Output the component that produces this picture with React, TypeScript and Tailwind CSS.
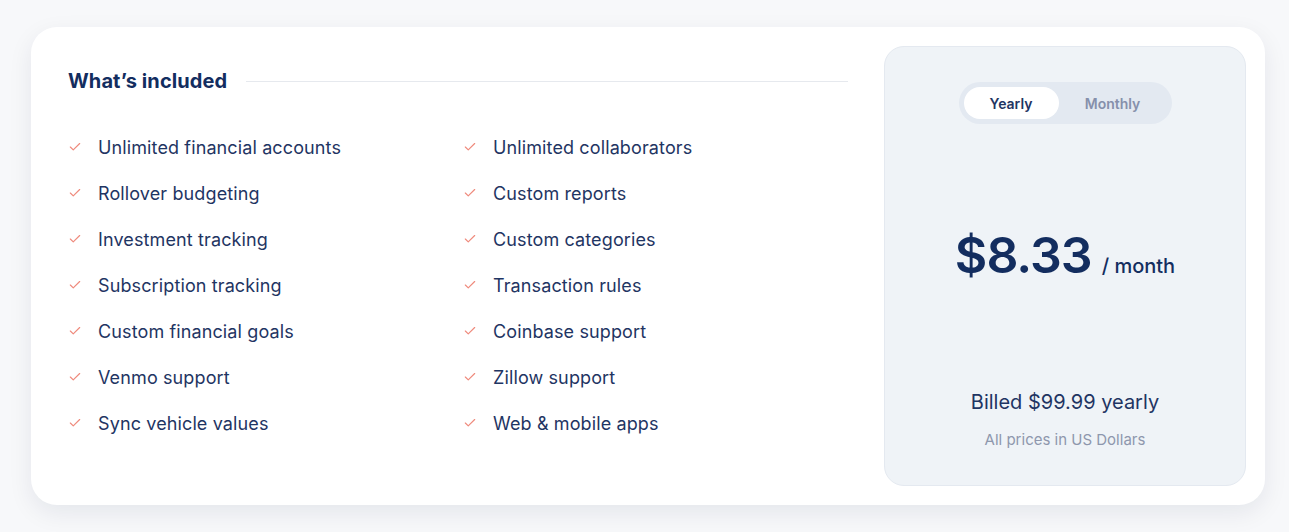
import { Check } from 'lucide-react'

const left = [
  'Unlimited financial accounts',
  'Rollover budgeting',
  'Investment tracking',
  'Subscription tracking',
  'Custom financial goals',
  'Venmo support',
  'Sync vehicle values',
]

const right = [
  'Unlimited collaborators',
  'Custom reports',
  'Custom categories',
  'Transaction rules',
  'Coinbase support',
  'Zillow support',
  'Web & mobile apps',
]

function Item({ label }: { label: string }) {
  return (
    <li className="flex items-center h-[46px]">
      <Check className="w-[14px] h-[14px] text-[#ef8a7c] shrink-0" strokeWidth={2} />
      <span className="ml-4 text-[18px] text-[#1f3563] tracking-[0.12px]">{label}</span>
    </li>
  )
}

export default function App() {
  return (
    <div
      className="min-h-[532px] bg-[#f7f8fa] pt-[27px] pl-[31px]"
      style={{ fontFamily: 'Inter, "Noto Sans", sans-serif' }}
    >
      <div className="w-[1234px] h-[478px] bg-white rounded-[26px] shadow-[0_8px_24px_rgba(15,30,70,0.08)] flex p-[19px]">
        <div className="flex-1 pl-[18px] pr-[36px] pt-[20px]">
          <div className="flex items-center gap-[19px]">
            <h2 className="text-[20px] font-bold text-[#132d5f] tracking-[0.1px]">What’s included</h2>
            <div className="flex-1 h-px bg-[#e6e9ee]" />
          </div>
          <div className="grid grid-cols-[395px_1fr] mt-[28px]">
            <ul>
              {left.map((l) => (
                <Item key={l} label={l} />
              ))}
            </ul>
            <ul>
              {right.map((l) => (
                <Item key={l} label={l} />
              ))}
            </ul>
          </div>
        </div>
        <div className="w-[362px] h-[440px] bg-[#eff3f7] border border-[#e4e9f0] rounded-[20px] flex flex-col items-center pt-[35px]">
          <div className="w-[213px] h-[42px] rounded-full bg-[#e3e9f1] flex items-center p-[5px]">
            <div className="w-[95px] h-[32px] rounded-full bg-white flex items-center justify-center text-[14px] font-semibold text-[#1f3563]">
              Yearly
            </div>
            <div className="flex-1 text-center text-[14px] font-semibold text-[#8690ab]">Monthly</div>
          </div>
          <div className="flex items-baseline mt-[106px]">
            <span className="text-[50px] font-semibold text-[#132d5f] leading-none tracking-[-1px]">$8.33</span>
            <span className="ml-[10px] text-[20px] font-medium text-[#132d5f]">/ month</span>
          </div>
          <div className="mt-auto mb-[34px] flex flex-col items-center">
            <div className="text-[20px] text-[#1f3563]">Billed $99.99 yearly</div>
            <div className="mt-[12px] text-[15px] text-[#8e97ad]">All prices in US Dollars</div>
          </div>
        </div>
      </div>
    </div>
  )
}
